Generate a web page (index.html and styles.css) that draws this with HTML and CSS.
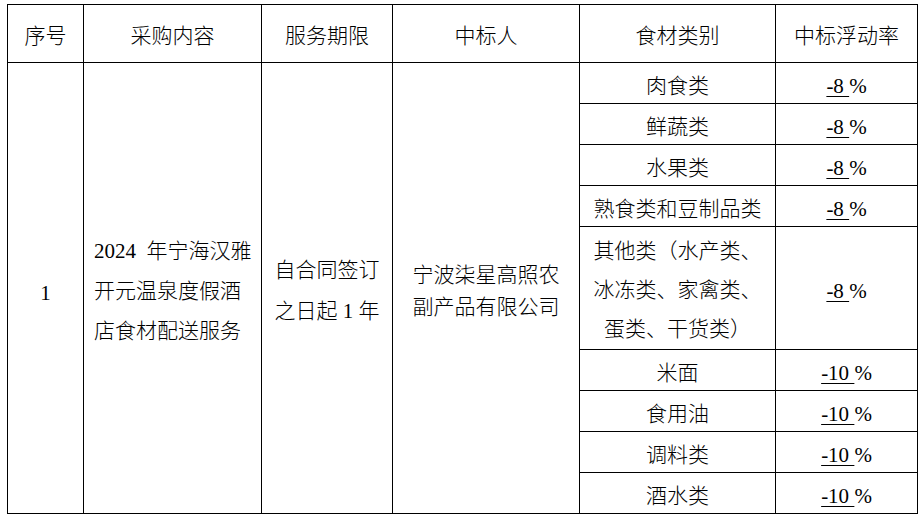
FILE: index.html
```html
<!DOCTYPE html>
<html lang="zh-CN">
<head>
<meta charset="utf-8">
<title>中标结果</title>
<link rel="stylesheet" href="styles.css">
</head>
<body>
<table class="bid">
  <colgroup>
    <col class="c1"><col class="c2"><col class="c3"><col class="c4"><col class="c5"><col class="c6">
  </colgroup>
  <thead>
    <tr class="head">
      <th>序号</th>
      <th>采购内容</th>
      <th>服务期限</th>
      <th>中标人</th>
      <th>食材类别</th>
      <th>中标浮动率</th>
    </tr>
  </thead>
  <tbody>
    <tr class="r41">
      <td rowspan="9" class="no">1</td>
      <td rowspan="9" class="content">2024&ensp;年宁海汉雅<br>开元温泉度假酒<br>店食材配送服务</td>
      <td rowspan="9" class="term">自合同签订<br>之日起 1 年</td>
      <td rowspan="9" class="winner">宁波柒星高照农<br>副产品有限公司</td>
      <td>肉食类</td>
      <td><span class="u">-8 </span>%</td>
    </tr>
    <tr class="r41"><td>鲜蔬类</td><td><span class="u">-8 </span>%</td></tr>
    <tr class="r41"><td>水果类</td><td><span class="u">-8 </span>%</td></tr>
    <tr class="r41"><td>熟食类和豆制品类</td><td><span class="u">-8 </span>%</td></tr>
    <tr class="r122"><td class="multi">其他类（水产类、<br>冰冻类、家禽类、<br>蛋类、干货类）</td><td><span class="u">-8 </span>%</td></tr>
    <tr class="r41"><td>米面</td><td><span class="u">-10 </span>%</td></tr>
    <tr class="r40"><td>食用油</td><td><span class="u">-10 </span>%</td></tr>
    <tr class="r41"><td>调料类</td><td><span class="u">-10 </span>%</td></tr>
    <tr class="r40"><td>酒水类</td><td><span class="u">-10 </span>%</td></tr>
  </tbody>
</table>
</body>
</html>
```
FILE: styles.css
```css
html, body {
  margin: 0;
  padding: 0;
  background: #ffffff;
}

body {
  padding: 4px 0 0 7px;
  font-family: "Liberation Serif", "Noto Sans CJK SC", serif;
  font-size: 21px;
  font-weight: 300;
  color: #000000;
}

.bid {
  border-collapse: collapse;
  table-layout: fixed;
  width: 910px;
}

.c1 { width: 76px; }
.c2 { width: 178px; }
.c3 { width: 131px; }
.c4 { width: 187px; }
.c5 { width: 196px; }
.c6 { width: 142px; }

.bid th,
.bid td {
  border: 1px solid #000000;
  padding: 7px 0 0 0;
  text-align: center;
  vertical-align: middle;
  font-weight: 300;
  line-height: 33px;
  white-space: nowrap;
}

.bid th {
  padding-top: 5px;
}

.head { height: 58px; }
.r41 { height: 41px; }
.r40 { height: 40px; }
.r122 { height: 122px; }

.bid td.content {
  text-align: left;
  padding-left: 10px;
  line-height: 40px;
  padding-top: 6px;
}

.bid td.term {
  line-height: 41px;
  padding-top: 6px;
}

.bid td.winner {
  line-height: 32px;
  padding-top: 6px;
}

.bid td.no {
  padding-top: 10px;
}

.bid td.multi {
  line-height: 39px;
  padding-top: 5px;
}

.u {
  text-decoration: underline;
  text-decoration-thickness: 1px;
  text-underline-offset: 3px;
}
```
